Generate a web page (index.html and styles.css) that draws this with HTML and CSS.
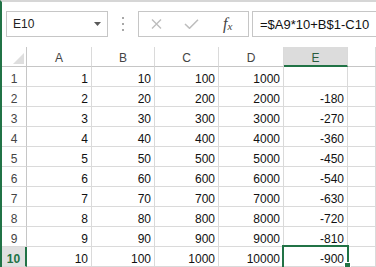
FILE: index.html
```html
<!DOCTYPE html>
<html>
<head>
<meta charset="utf-8">
<link rel="stylesheet" href="styles.css">
</head>
<body>
<div class="app">
  <div class="fbar">
    <div class="namebox"><span>E10</span><svg class="arrow" width="7" height="4" viewBox="0 0 7 4"><path d="M0 0H7L3.5 4Z" fill="#5a5a5a"/></svg></div>
    <div class="grip"><i></i><i></i><i></i></div>
    <div class="btns">
      <svg class="xb" width="11" height="10" viewBox="0 0 11 10"><path d="M1 0.5L10 9.5M10 0.5L1 9.5" stroke="#bdbdbd" stroke-width="1.4" fill="none"/></svg>
      <svg class="ck" width="15" height="10" viewBox="0 0 15 10"><path d="M1 5L5.5 9.3L14 0.8" stroke="#bdbdbd" stroke-width="1.5" fill="none"/></svg>
      <span class="fx">f<span class="fxx">x</span></span>
    </div>
    <div class="formula">=$A9*10+B$1-C10</div>
  </div>
  <div class="sheet">
    <div class="c corner"><svg width="11" height="11" viewBox="0 0 11 11"><path d="M11 0V11H0Z" fill="#dedede"/></svg></div>
    <div class="c h">A</div><div class="c h">B</div><div class="c h">C</div><div class="c h">D</div><div class="c h sel">E</div><div class="c h last"></div>

    <div class="c rh">1</div><div class="c n">1</div><div class="c n">10</div><div class="c n">100</div><div class="c n">1000</div><div class="c n"></div><div class="c last"></div>
    <div class="c rh">2</div><div class="c n">2</div><div class="c n">20</div><div class="c n">200</div><div class="c n">2000</div><div class="c n">-180</div><div class="c last"></div>
    <div class="c rh">3</div><div class="c n">3</div><div class="c n">30</div><div class="c n">300</div><div class="c n">3000</div><div class="c n">-270</div><div class="c last"></div>
    <div class="c rh">4</div><div class="c n">4</div><div class="c n">40</div><div class="c n">400</div><div class="c n">4000</div><div class="c n">-360</div><div class="c last"></div>
    <div class="c rh">5</div><div class="c n">5</div><div class="c n">50</div><div class="c n">500</div><div class="c n">5000</div><div class="c n">-450</div><div class="c last"></div>
    <div class="c rh">6</div><div class="c n">6</div><div class="c n">60</div><div class="c n">600</div><div class="c n">6000</div><div class="c n">-540</div><div class="c last"></div>
    <div class="c rh">7</div><div class="c n">7</div><div class="c n">70</div><div class="c n">700</div><div class="c n">7000</div><div class="c n">-630</div><div class="c last"></div>
    <div class="c rh">8</div><div class="c n">8</div><div class="c n">80</div><div class="c n">800</div><div class="c n">8000</div><div class="c n">-720</div><div class="c last"></div>
    <div class="c rh">9</div><div class="c n">9</div><div class="c n">90</div><div class="c n">900</div><div class="c n">9000</div><div class="c n">-810</div><div class="c last"></div>
    <div class="c rh rsel">10</div><div class="c n">10</div><div class="c n">100</div><div class="c n">1000</div><div class="c n">10000</div><div class="c n active">-900<span class="selbox"></span><span class="handle"></span></div><div class="c last"></div>
  </div>
</div>
</body>
</html>
```

FILE: styles.css
```css
html, body {
  margin: 0;
  padding: 0;
}
body {
  width: 376px;
  height: 267px;
  overflow: hidden;
  background: #fff;
  font-family: "Liberation Sans", Arial, sans-serif;
  font-size: 12px;
  color: #111;
}
.app {
  border-left: 2px solid #217346;
  border-top: 2px solid #d6d6d6;
  height: 265px;
  overflow: hidden;
}
.fbar {
  display: flex;
  align-items: center;
  padding-top: 9px;
  height: 26px;
}
.namebox {
  box-sizing: border-box;
  margin-left: 4px;
  width: 102px;
  height: 26px;
  border: 1px solid #c6c6c6;
  display: flex;
  align-items: center;
  padding-left: 6px;
  font-size: 12px;
  color: #222;
}
.namebox .arrow {
  margin-left: auto;
  margin-right: 6px;
}
.grip {
  width: 30px;
  height: 26px;
  display: flex;
  flex-direction: column;
  align-items: center;
  justify-content: center;
  gap: 4px;
}
.grip i {
  display: block;
  width: 2px;
  height: 2px;
  background: #a8a8a8;
}
.btns {
  box-sizing: border-box;
  width: 111px;
  height: 26px;
  border: 1px solid #c6c6c6;
  display: flex;
  align-items: center;
}
.xb { margin-left: 12px; }
.ck { margin-left: 22px; }
.fx {
  margin-left: 24px;
  font-family: "Liberation Serif", "Times New Roman", serif;
  font-style: italic;
  font-size: 16px;
  color: #444;
  line-height: 1;
}
.fxx {
  font-size: 11px;
  position: relative;
  top: 1px;
}
.formula {
  box-sizing: border-box;
  margin-left: 3px;
  flex: 1;
  height: 26px;
  border: 1px solid #c6c6c6;
  border-right: none;
  display: flex;
  align-items: center;
  padding-left: 7px;
  font-size: 13px;
  color: #111;
  white-space: nowrap;
}
.sheet {
  margin-top: 10px;
  display: grid;
  grid-template-columns: 25px 65px 63px 64px 65px 64px 1fr;
  grid-auto-rows: 20px;
}
.c {
  box-sizing: border-box;
  border-right: 1px solid #dadada;
  border-bottom: 1px solid #dadada;
  padding-top: 5px;
  line-height: 14px;
  white-space: nowrap;
}
.corner {
  display: flex;
  justify-content: flex-end;
  align-items: flex-end;
  padding: 0 2px 2px 0;
  border-right-color: #c6c6c6;
  border-bottom-color: #c6c6c6;
}
.h {
  text-align: center;
  color: #444;
  padding-top: 4px;
  border-right-color: #dadada;
  border-bottom-color: #c6c6c6;
}
.h.sel {
  background: #dcdcdc;
  color: #2a5c3e;
  border-bottom: 2px solid #217346;
}
.rh {
  text-align: center;
  color: #444;
  border-right-color: #c6c6c6;
}
.rh.rsel {
  background: #e1e1e1;
  color: #217346;
  font-weight: bold;
  border-right: 2px solid #217346;
}
.n {
  text-align: right;
  padding-right: 3px;
}
.active {
  position: relative;
}
.selbox {
  position: absolute;
  left: -2px;
  top: -2px;
  width: 67px;
  height: 24px;
  box-sizing: border-box;
  border: 2px solid #217346;
}
.handle {
  position: absolute;
  left: 61px;
  top: 16px;
  width: 5px;
  height: 5px;
  background: #217346;
  box-shadow: 0 0 0 1px #fff;
}
```
